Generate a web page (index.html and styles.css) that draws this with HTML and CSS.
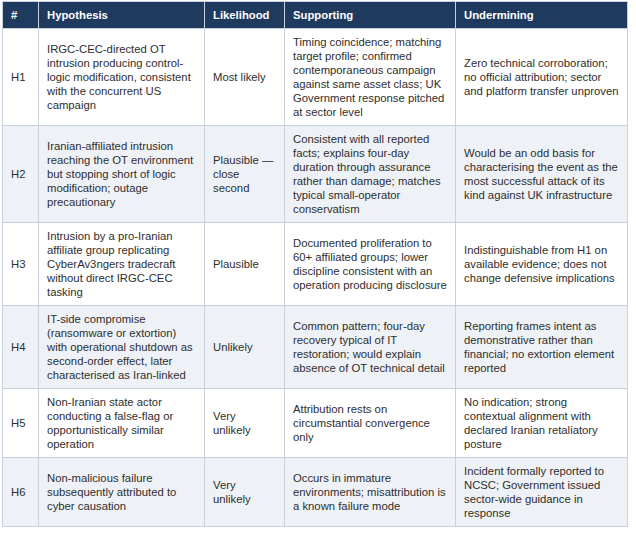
FILE: index.html
```html
<!DOCTYPE html>
<html lang="en">
<head>
<meta charset="utf-8">
<title>Hypotheses</title>
<link rel="stylesheet" href="styles.css">
</head>
<body>
<table class="ach">
  <colgroup>
    <col class="c-num">
    <col class="c-hyp">
    <col class="c-lik">
    <col class="c-sup">
    <col class="c-und">
  </colgroup>
  <thead>
    <tr>
      <th>#</th>
      <th>Hypothesis</th>
      <th>Likelihood</th>
      <th>Supporting</th>
      <th>Undermining</th>
    </tr>
  </thead>
  <tbody>
    <tr>
      <td>H1</td>
      <td>IRGC-CEC-directed OT intrusion producing control-logic modification, consistent with the concurrent US campaign</td>
      <td class="lik">Most likely</td>
      <td>Timing coincidence; matching target profile; confirmed contemporaneous campaign against same asset class; UK Government response pitched at sector level</td>
      <td class="und">Zero technical corroboration; no official attribution; sector and platform transfer unproven</td>
    </tr>
    <tr class="alt">
      <td>H2</td>
      <td>Iranian-affiliated intrusion reaching the OT environment but stopping short of logic modification; outage precautionary</td>
      <td class="lik">Plausible — close second</td>
      <td>Consistent with all reported facts; explains four-day duration through assurance rather than damage; matches typical small-operator conservatism</td>
      <td class="und">Would be an odd basis for characterising the event as the most successful attack of its kind against UK infrastructure</td>
    </tr>
    <tr>
      <td>H3</td>
      <td>Intrusion by a pro-Iranian affiliate group replicating CyberAv3ngers tradecraft without direct IRGC-CEC tasking</td>
      <td class="lik">Plausible</td>
      <td>Documented proliferation to 60+ affiliated groups; lower discipline consistent with an operation producing disclosure</td>
      <td class="und">Indistinguishable from H1 on available evidence; does not change defensive implications</td>
    </tr>
    <tr class="alt">
      <td>H4</td>
      <td>IT-side compromise (ransomware or extortion) with operational shutdown as second-order effect, later characterised as Iran-linked</td>
      <td class="lik">Unlikely</td>
      <td>Common pattern; four-day recovery typical of IT restoration; would explain absence of OT technical detail</td>
      <td class="und">Reporting frames intent as demonstrative rather than financial; no extortion element reported</td>
    </tr>
    <tr>
      <td>H5</td>
      <td>Non-Iranian state actor conducting a false-flag or opportunistically similar operation</td>
      <td class="lik">Very unlikely</td>
      <td>Attribution rests on circumstantial convergence only</td>
      <td class="und">No indication; strong contextual alignment with declared Iranian retaliatory posture</td>
    </tr>
    <tr class="alt">
      <td>H6</td>
      <td>Non-malicious failure subsequently attributed to cyber causation</td>
      <td class="lik">Very unlikely</td>
      <td>Occurs in immature environments; misattribution is a known failure mode</td>
      <td class="und">Incident formally reported to NCSC; Government issued sector-wide guidance in response</td>
    </tr>
  </tbody>
</table>
</body>
</html>
```

FILE: styles.css
```css
html, body {
  margin: 0;
  padding: 0;
  background: #ffffff;
}

body {
  padding: 1px 0 0 2px;
  font-family: "Liberation Sans", Arial, sans-serif;
  font-size: 11.3px;
  line-height: 14px;
  color: #2e2e2e;
}

.ach {
  border-collapse: collapse;
  table-layout: fixed;
  width: 625px;
}

.c-num { width: 36px; }
.c-hyp { width: 166px; }
.c-lik { width: 80px; }
.c-sup { width: 171px; }
.c-und { width: 172px; }

.ach th,
.ach td {
  border: 1px solid #c9d1dd;
  padding: 6px 5px 6px 8px;
  text-align: left;
  vertical-align: middle;
}

.ach td.lik {
  padding-right: 9px;
}

.ach td.und {
  padding-right: 7px;
}

.ach th {
  background: #1f3a5f;
  color: #ffffff;
  font-weight: bold;
}

.ach td {
  background: #ffffff;
}

.ach tr.alt td {
  background: #eef2f7;
}
```
